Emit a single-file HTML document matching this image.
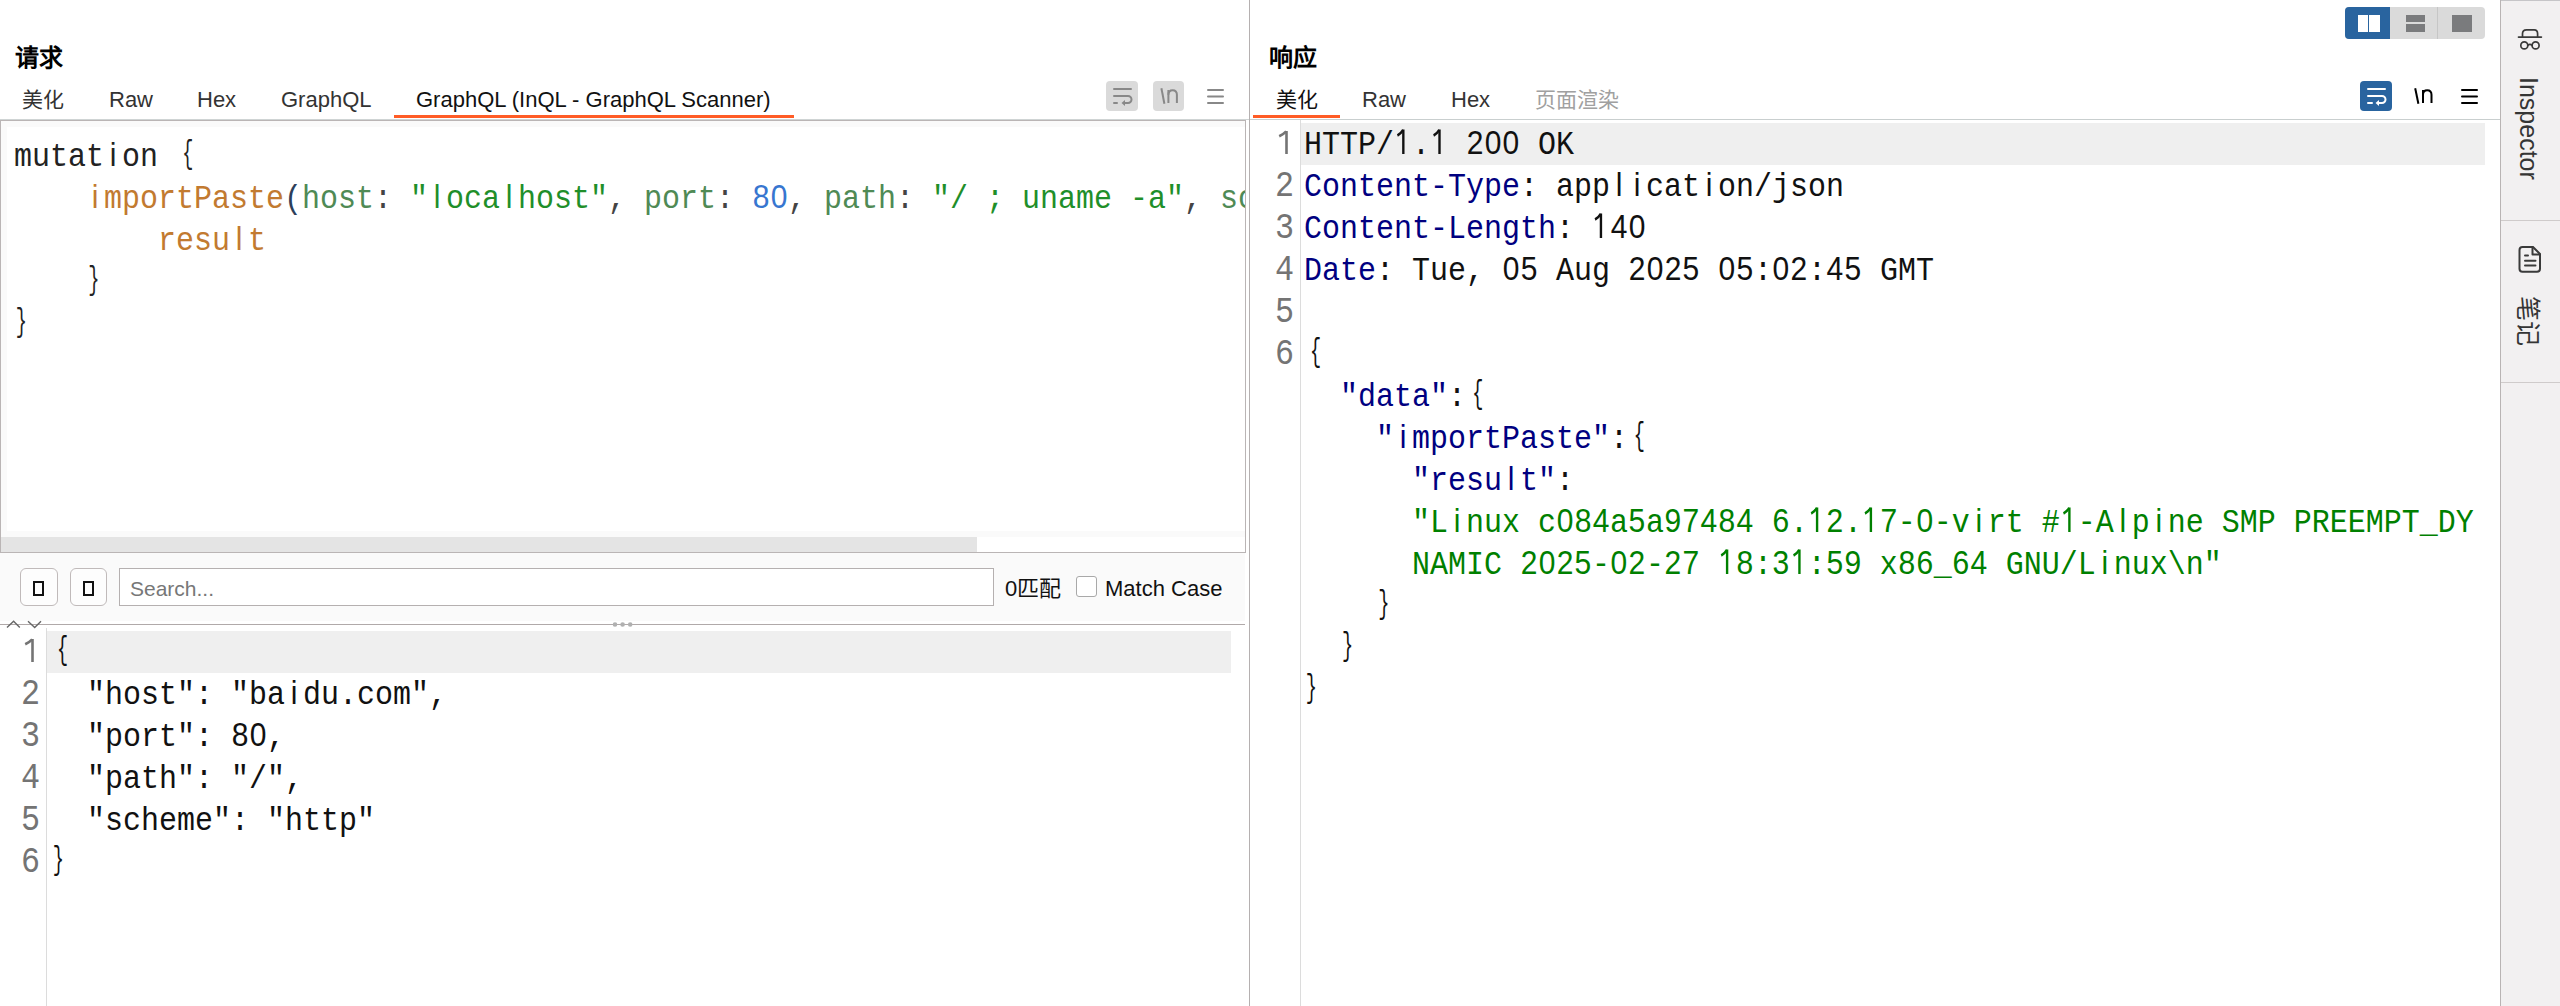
<!DOCTYPE html>
<html lang="zh-CN">
<head>
<meta charset="utf-8">
<style>
*{margin:0;padding:0;box-sizing:border-box}
html,body{width:2560px;height:1006px;overflow:hidden;background:#fff}
body{position:relative;font-family:"Liberation Sans",sans-serif;color:#1a1a1a}
.a{position:absolute}
.ui{font-family:"Liberation Sans",sans-serif;font-size:22px;line-height:22px;white-space:pre}
.code{font-family:"Liberation Mono",monospace;font-size:34px;line-height:42px;white-space:pre;transform-origin:0 0;transform:scaleX(0.8822)}
.ln{font-family:"Liberation Mono",monospace;font-size:36px;line-height:42px;white-space:pre;color:#747474;transform-origin:0 0;transform:scaleX(0.8822)}
.lb,.rb{display:inline-block;width:0.6001em}
.lb{transform:translate(2.8px,-3.5px) scaleX(0.62)}
.rb{transform:translate(-1.8px,-3.5px) scaleX(0.62)}
.n{display:inline-block;width:0.6001em;height:42px;line-height:36.5px;vertical-align:top;text-align:center;font-family:"Liberation Sans",sans-serif}
.hl{background:#efefef}
.k{color:#000080}
.s{color:#008000}
.fn{color:#c27a30}
.arg{color:#4f8a55}
.num{color:#3776d0}
.par{color:#2c3e5a}
.pun{color:#444}
.str{color:#1f8f2a}
</style>
</head>
<body>
<!-- ============ LEFT: REQUEST ============ -->
<div class="a" style="left:15px;top:43px;font-size:24px;font-weight:bold;line-height:30px;color:#000">请求</div>
<div class="a ui" style="left:22px;top:89px;color:#333;font-size:21px">美化</div>
<div class="a ui" style="left:109px;top:89px;color:#333">Raw</div>
<div class="a ui" style="left:197px;top:89px;color:#333">Hex</div>
<div class="a ui" style="left:281px;top:89px;color:#333">GraphQL</div>
<div class="a ui" style="left:416px;top:89px;color:#111">GraphQL (InQL - GraphQL Scanner)</div>
<div class="a" style="left:394px;top:115px;width:400px;height:3px;background:#ff5c26"></div>

<!-- left toolbar icons -->
<div class="a" style="left:1106px;top:81px;width:32px;height:30px;background:#dadada;border-radius:4px"></div>
<svg class="a" style="left:1106px;top:81px" width="32" height="30" viewBox="0 0 32 30">
 <g stroke="#888" stroke-width="2" stroke-linecap="round" fill="none">
  <line x1="8" y1="8" x2="25" y2="8"/>
  <path d="M8 15 H22 a3.5 3.5 0 0 1 0 7 H18"/>
  <line x1="8" y1="22" x2="11" y2="22"/>
 </g>
 <path d="M15.5 22 L19 19 L19 25 Z" fill="#888"/>
</svg>
<div class="a" style="left:1153px;top:81px;width:31px;height:30px;background:#dadada;border-radius:4px"></div>
<svg class="a" style="left:1153px;top:81px" width="31" height="30" viewBox="0 0 31 30">
 <g stroke="#888" stroke-width="2" fill="none">
  <line x1="8.4" y1="7.2" x2="11.4" y2="22.8"/>
  <path d="M15.4 9 V22"/><path d="M15.4 13.8 Q15.4 9.2 19.6 9.2 Q23.9 9.2 23.9 13.8 V22"/>
 </g>
</svg>
<svg class="a" style="left:1206px;top:85px" width="20" height="22" viewBox="0 0 20 22">
 <g stroke="#888" stroke-width="2" stroke-linecap="round">
  <line x1="2" y1="5" x2="17" y2="5"/><line x1="2" y1="11.5" x2="17" y2="11.5"/><line x1="2" y1="18" x2="17" y2="18"/>
 </g>
</svg>

<!-- tab bar bottom line -->
<div class="a" style="left:0;top:119px;width:1249px;height:1px;background:#cfd4d4"></div>
<!-- request editor box -->
<div class="a" style="left:0;top:120px;width:1246px;height:433px;border:1px solid #bab5b5;background:#fafafa"></div>
<div class="a" style="left:7px;top:127px;width:1238px;height:404px;background:#fff"></div>
<!-- scrollbar -->
<div class="a" style="left:1px;top:537px;width:976px;height:15px;background:#e4e4e4"></div>
<div class="a" style="left:977px;top:537px;width:268px;height:15px;background:#fff"></div>

<div class="a" style="left:7px;top:127px;width:1238px;height:404px;overflow:hidden">
<div class="code" style="position:absolute;left:7px;top:9px;color:#222">mutat<span class="n">i</span>on <span class="lb">{</span>
    <span class="fn"><span class="n">i</span>mportPaste</span><span class="par">(</span><span class="arg">host</span><span class="pun">:</span> <span class="str">"<span class="n">l</span>oca<span class="n">l</span>host"</span><span class="pun">,</span> <span class="arg">port</span><span class="pun">:</span> <span class="num"><span class="n">8</span><span class="n">0</span></span><span class="pun">,</span> <span class="arg">path</span><span class="pun">:</span> <span class="str">"/ ; uname -a"</span><span class="pun">,</span> <span class="arg">sc</span>
        <span class="fn">resu<span class="n">l</span>t</span>
    <span class="rb">}</span>
<span class="rb">}</span></div>
</div>

<!-- search panel -->
<div class="a" style="left:0;top:553px;width:1245px;height:68px;background:#fafafa"></div>
<div class="a" style="left:20px;top:568px;width:38px;height:38px;border:1px solid #c0baba;border-radius:6px;background:#fdfdfd"></div>
<div class="a" style="left:33px;top:581px;width:11px;height:15px;border:2px solid #111"></div>
<div class="a" style="left:70px;top:568px;width:37px;height:38px;border:1px solid #c0baba;border-radius:6px;background:#fdfdfd"></div>
<div class="a" style="left:83px;top:581px;width:11px;height:15px;border:2px solid #111"></div>
<div class="a" style="left:119px;top:568px;width:875px;height:38px;border:1px solid #b5b0b0;background:#fff"></div>
<div class="a ui" style="left:130px;top:578px;color:#777;font-size:21px">Search...</div>
<div class="a ui" style="left:1005px;top:578px;color:#111">0匹配</div>
<div class="a" style="left:1076px;top:576px;width:21px;height:21px;border:1px solid #a9a9a9;border-radius:3px;background:#fff"></div>
<div class="a ui" style="left:1105px;top:578px;color:#111">Match Case</div>

<!-- splitter -->
<div class="a" style="left:0;top:624px;width:1245px;height:1px;background:#b0a9a9"></div>
<svg class="a" style="left:5px;top:619px" width="40" height="11" viewBox="0 0 40 11">
 <g stroke="#666" stroke-width="1.4" fill="none">
  <polyline points="2,8.5 8.6,2.3 14.8,8.5"/>
  <polyline points="23,2.3 29.7,8.5 36,2.3"/>
 </g>
</svg>
<svg class="a" style="left:608px;top:618px" width="30" height="13" viewBox="0 0 30 13">
 <g fill="#b0b0b0"><circle cx="7" cy="6.5" r="2.3"/><circle cx="14.6" cy="6.5" r="2.3"/><circle cx="22.2" cy="6.5" r="2.3"/></g>
</svg>

<!-- lower json editor -->
<div class="a" style="left:46px;top:628px;width:1px;height:378px;background:#dcdcdc"></div>
<div class="a hl" style="left:47px;top:631px;width:1184px;height:42px"></div>
<div class="a" style="left:21px;top:632px">
<div class="ln"> 
2
3
4
5
6</div>
</div>
<div class="a" style="left:51px;top:632px">
<div class="code" style="color:#111"><span class="lb">{</span>
  "host": "ba<span class="n">i</span>du.com",
  "port": <span class="n">8</span><span class="n">0</span>,
  "path": "/",
  "scheme": "http"
<span class="rb">}</span></div>
</div>

<svg class="a" style="left:24px;top:638px" width="12" height="26" viewBox="0 0 12 26"><g fill="none" stroke="#747474" stroke-width="2.6" stroke-linejoin="miter"><path d="M8.5 1 V24"/><path d="M1.2 6.2 Q5.5 4.2 8.2 1.3"/></g></svg>
<!-- main divider -->
<div class="a" style="left:1249px;top:0;width:1px;height:1006px;background:#b5b0b0"></div>

<!-- ============ RIGHT: RESPONSE ============ -->
<!-- layout toggle -->
<div class="a" style="left:2345px;top:7px;width:140px;height:32px;background:#dadada;border-radius:4px;overflow:hidden">
  <div class="a" style="left:0;top:0;width:45px;height:32px;background:#29649f"></div>
  <div class="a" style="left:92px;top:0;width:1px;height:32px;background:#c6c6c6"></div>
</div>
<div class="a" style="left:2358px;top:15px;width:10px;height:17px;background:#fff"></div>
<div class="a" style="left:2369px;top:15px;width:11px;height:17px;background:#fff"></div>
<div class="a" style="left:2406px;top:15px;width:19px;height:7px;background:#7a7b7d"></div>
<div class="a" style="left:2406px;top:24px;width:19px;height:8px;background:#7a7b7d"></div>
<div class="a" style="left:2452px;top:15px;width:20px;height:17px;background:#7a7b7d"></div>

<div class="a" style="left:1269px;top:43px;font-size:24px;font-weight:bold;line-height:30px;color:#000">响应</div>
<div class="a ui" style="left:1276px;top:89px;color:#111;font-size:21px">美化</div>
<div class="a ui" style="left:1362px;top:89px;color:#333">Raw</div>
<div class="a ui" style="left:1451px;top:89px;color:#333">Hex</div>
<div class="a ui" style="left:1535px;top:89px;color:#a0a0a0;font-size:21px">页面渲染</div>
<div class="a" style="left:1253px;top:115px;width:87px;height:3px;background:#ff5c26"></div>

<!-- right toolbar icons -->
<div class="a" style="left:2360px;top:81px;width:32px;height:30px;background:#29649f;border-radius:4px"></div>
<svg class="a" style="left:2360px;top:81px" width="32" height="30" viewBox="0 0 32 30">
 <g stroke="#fff" stroke-width="2" stroke-linecap="round" fill="none">
  <line x1="8" y1="8" x2="25" y2="8"/>
  <path d="M8 15 H22 a3.5 3.5 0 0 1 0 7 H18"/>
  <line x1="8" y1="22" x2="12" y2="22"/>
 </g>
 <path d="M15.5 22 L19 19 L19 25 Z" fill="#fff"/>
</svg>
<svg class="a" style="left:2407px;top:81px" width="31" height="30" viewBox="0 0 31 30">
 <g stroke="#000" stroke-width="2" fill="none">
  <line x1="8.2" y1="7.2" x2="11.4" y2="22.8"/>
  <path d="M16 9 V22"/><path d="M16 13.8 Q16 9.2 20.2 9.2 Q24.5 9.2 24.5 13.8 V22"/>
 </g>
</svg>
<svg class="a" style="left:2460px;top:85px" width="20" height="22" viewBox="0 0 20 22">
 <g stroke="#000" stroke-width="2" stroke-linecap="round">
  <line x1="2" y1="5" x2="17" y2="5"/><line x1="2" y1="11.5" x2="17" y2="11.5"/><line x1="2" y1="18" x2="17" y2="18"/>
 </g>
</svg>

<div class="a" style="left:1250px;top:119px;width:1250px;height:1px;background:#c9cfcf"></div>
<div class="a" style="left:1300px;top:120px;width:1px;height:886px;background:#dcdcdc"></div>
<div class="a hl" style="left:1301px;top:123px;width:1184px;height:42px"></div>
<div class="a" style="left:1275px;top:124px">
<div class="ln"> 
2
3
4
5
6</div>
</div>
<svg class="a" style="left:1278px;top:130px" width="12" height="26" viewBox="0 0 12 26"><g fill="none" stroke="#747474" stroke-width="2.6" stroke-linejoin="miter"><path d="M8.5 1 V24"/><path d="M1.2 6.2 Q5.5 4.2 8.2 1.3"/></g></svg>
<div class="a" style="left:1304px;top:124px">
<div class="code" style="color:#111">HTTP/<span class="n"><svg width="20.4" height="42" viewBox="0 0 20.4 42" style="display:block"><g fill="none" stroke="currentColor" stroke-width="2.7"><path d="M10.6 5.6 V30.1"/><path d="M3.9 11.4 Q8 9.6 10.3 5.9"/></g></svg></span>.<span class="n"><svg width="20.4" height="42" viewBox="0 0 20.4 42" style="display:block"><g fill="none" stroke="currentColor" stroke-width="2.7"><path d="M10.6 5.6 V30.1"/><path d="M3.9 11.4 Q8 9.6 10.3 5.9"/></g></svg></span> <span class="n">2</span><span class="n">0</span><span class="n">0</span> OK
<span class="k">Content-Type</span>: app<span class="n">l</span><span class="n">i</span>cat<span class="n">i</span>on/json
<span class="k">Content-Length</span>: <span class="n"><svg width="20.4" height="42" viewBox="0 0 20.4 42" style="display:block"><g fill="none" stroke="currentColor" stroke-width="2.7"><path d="M10.6 5.6 V30.1"/><path d="M3.9 11.4 Q8 9.6 10.3 5.9"/></g></svg></span><span class="n">4</span><span class="n">0</span>
<span class="k">Date</span>: Tue, <span class="n">0</span><span class="n">5</span> Aug <span class="n">2</span><span class="n">0</span><span class="n">2</span><span class="n">5</span> <span class="n">0</span><span class="n">5</span>:<span class="n">0</span><span class="n">2</span>:<span class="n">4</span><span class="n">5</span> GMT

<span class="lb">{</span>
  <span class="k">"data"</span>:<span class="lb">{</span>
    <span class="k">"<span class="n">i</span>mportPaste"</span>:<span class="lb">{</span>
      <span class="k">"resu<span class="n">l</span>t"</span>:
      <span class="s">"L<span class="n">i</span>nux c<span class="n">0</span><span class="n">8</span><span class="n">4</span>a<span class="n">5</span>a<span class="n">9</span><span class="n">7</span><span class="n">4</span><span class="n">8</span><span class="n">4</span> <span class="n">6</span>.<span class="n"><svg width="20.4" height="42" viewBox="0 0 20.4 42" style="display:block"><g fill="none" stroke="currentColor" stroke-width="2.7"><path d="M10.6 5.6 V30.1"/><path d="M3.9 11.4 Q8 9.6 10.3 5.9"/></g></svg></span><span class="n">2</span>.<span class="n"><svg width="20.4" height="42" viewBox="0 0 20.4 42" style="display:block"><g fill="none" stroke="currentColor" stroke-width="2.7"><path d="M10.6 5.6 V30.1"/><path d="M3.9 11.4 Q8 9.6 10.3 5.9"/></g></svg></span><span class="n">7</span>-<span class="n">0</span>-v<span class="n">i</span>rt #<span class="n"><svg width="20.4" height="42" viewBox="0 0 20.4 42" style="display:block"><g fill="none" stroke="currentColor" stroke-width="2.7"><path d="M10.6 5.6 V30.1"/><path d="M3.9 11.4 Q8 9.6 10.3 5.9"/></g></svg></span>-A<span class="n">l</span>p<span class="n">i</span>ne SMP PREEMPT_DY</span>
      <span class="s">NAMIC <span class="n">2</span><span class="n">0</span><span class="n">2</span><span class="n">5</span>-<span class="n">0</span><span class="n">2</span>-<span class="n">2</span><span class="n">7</span> <span class="n"><svg width="20.4" height="42" viewBox="0 0 20.4 42" style="display:block"><g fill="none" stroke="currentColor" stroke-width="2.7"><path d="M10.6 5.6 V30.1"/><path d="M3.9 11.4 Q8 9.6 10.3 5.9"/></g></svg></span><span class="n">8</span>:<span class="n">3</span><span class="n"><svg width="20.4" height="42" viewBox="0 0 20.4 42" style="display:block"><g fill="none" stroke="currentColor" stroke-width="2.7"><path d="M10.6 5.6 V30.1"/><path d="M3.9 11.4 Q8 9.6 10.3 5.9"/></g></svg></span>:<span class="n">5</span><span class="n">9</span> x<span class="n">8</span><span class="n">6</span>_<span class="n">6</span><span class="n">4</span> GNU/L<span class="n">i</span>nux\n"</span>
    <span class="rb">}</span>
  <span class="rb">}</span>
<span class="rb">}</span></div>
</div>

<!-- ============ SIDEBAR ============ -->
<div class="a" style="left:2500px;top:0;width:60px;height:1006px;background:#f2f0f1;border-left:1px solid #b9b4b4"></div>
<div class="a" style="left:2501px;top:0;width:59px;height:1px;background:#c6c5c8"></div>
<div class="a" style="left:2501px;top:220px;width:59px;height:1px;background:#cfcbcb"></div>
<div class="a" style="left:2501px;top:382px;width:59px;height:1px;background:#cfcbcb"></div>
<svg class="a" style="left:2510px;top:20px" width="40" height="40" viewBox="0 0 40 40">
 <g stroke="#3a3a3a" stroke-width="1.7" fill="none" stroke-linecap="round" stroke-linejoin="round">
  <line x1="8.5" y1="17.1" x2="31.4" y2="17.1"/>
  <path d="M12.5 17.1 V13.8 Q12.5 9.8 16.5 9.8 H24.2 Q27.6 9.8 27.6 13.8 V17.1"/>
  <circle cx="14.3" cy="25.4" r="3.5"/><circle cx="25.6" cy="25.4" r="3.5"/>
  <path d="M17.8 25.4 Q19.95 23.4 22.1 25.4"/>
 </g>
</svg>
<div class="a" style="left:2516px;top:77px;width:26px;height:106px;"><div class="ui" style="position:absolute;left:0;top:0;font-size:25px;line-height:26px;transform-origin:0 0;transform:translate(26px,0) rotate(90deg);color:#353535">Inspector</div></div>
<svg class="a" style="left:2510px;top:238px" width="40" height="42" viewBox="0 0 40 42">
 <g stroke="#3a3a3a" stroke-width="2" fill="none" stroke-linejoin="round" stroke-linecap="round">
  <path d="M12.5 9 H23 L30 16 V30.7 a3 3 0 0 1 -3 3 H12.5 a3 3 0 0 1 -3 -3 V12 a3 3 0 0 1 3 -3 Z"/>
  <path d="M22.5 9 V16.5 H30"/>
  <line x1="15" y1="17.5" x2="18" y2="17.5"/><line x1="15" y1="22.8" x2="25.5" y2="22.8"/><line x1="15" y1="27.6" x2="25.5" y2="27.6"/>
 </g>
</svg>
<div class="a" style="left:2515px;top:296px;width:26px;height:50px;"><div class="ui" style="position:absolute;left:0;top:0;font-size:25px;line-height:26px;transform-origin:0 0;transform:translate(26px,0) rotate(90deg);color:#353535">笔记</div></div>

</body>
</html>
